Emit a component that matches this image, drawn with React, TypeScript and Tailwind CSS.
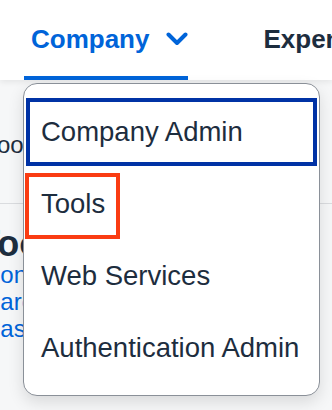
const links = [
  { label: "Contracts", shift: "-ml-[17px]" },
  { label: "Search", shift: "-ml-[29px]" },
  { label: "Dashboard", shift: "-ml-[17px]" },
];

export default function App() {
  return (
    <div
      className="relative w-[332px] h-[410px] overflow-hidden bg-[#f6f7f8] text-[#1d2d3e]"
      style={{ fontFamily: '"Liberation Sans", Arial, sans-serif' }}
    >
      {/* top navigation */}
      <header className="relative z-10 flex h-[80px] items-stretch bg-white shadow-[0_2px_6px_rgba(0,0,0,0.08)]">
        <div className="ml-[24px] flex w-[171px] items-center gap-[17px] border-b-4 border-[#0064d9] pl-[7px] pt-[2px] text-[26px] font-bold text-[#0064d9]">
          <span>Company</span>
          <svg width="22" height="14" viewBox="0 0 22 14" fill="none">
            <path d="M2.5 2.5 L11 11 L19.5 2.5" stroke="#0064d9" strokeWidth="4" strokeLinecap="round" strokeLinejoin="round" />
          </svg>
        </div>
        <div className="ml-[75px] flex items-center whitespace-nowrap pb-[2px] text-[26px] font-bold text-[#1d2d3e]">
          Expenses
        </div>
      </header>

      {/* page content under the menu */}
      <main className="flex flex-col whitespace-nowrap">
        <div className="flex h-[124px] items-center border-b border-[#dadcdf] pt-[6px] text-[24px]">
          <span className="-ml-[15px]">Tools</span>
        </div>
        <h1 className="-ml-[22px] pt-[20px] text-[36px] font-bold leading-[40px]">Tools</h1>
        <ul className="-mt-[3px] flex flex-col text-[24px] leading-[27px] text-[#0064d9]">
          {links.map((l) => (
            <li key={l.label} className={l.shift}>
              {l.label}
            </li>
          ))}
        </ul>
      </main>

      {/* dropdown menu */}
      <div className="absolute left-[23px] top-[83px] z-20 flex h-[313px] w-[297px] flex-col rounded-[14px] border border-[#8a9098] bg-white pt-[14px] text-[27.5px] shadow-[0_6px_16px_rgba(0,0,0,0.12)]">
        <div className="mx-[2px] flex h-[68px] items-center border-4 border-[#0032a5] pl-[11px]">
          Company Admin
        </div>
        <div className="relative mt-[2px] flex h-[72px] items-center pl-[17px]">
          Tools
          <span className="absolute left-[1px] top-[5px] h-[66px] w-[95px] border-4 border-[#fa3c12]" />
        </div>
        <div className="flex h-[72px] items-center pl-[17px]">Web Services</div>
        <div className="flex h-[72px] items-center pl-[17px]">Authentication Admin</div>
      </div>
    </div>
  );
}
